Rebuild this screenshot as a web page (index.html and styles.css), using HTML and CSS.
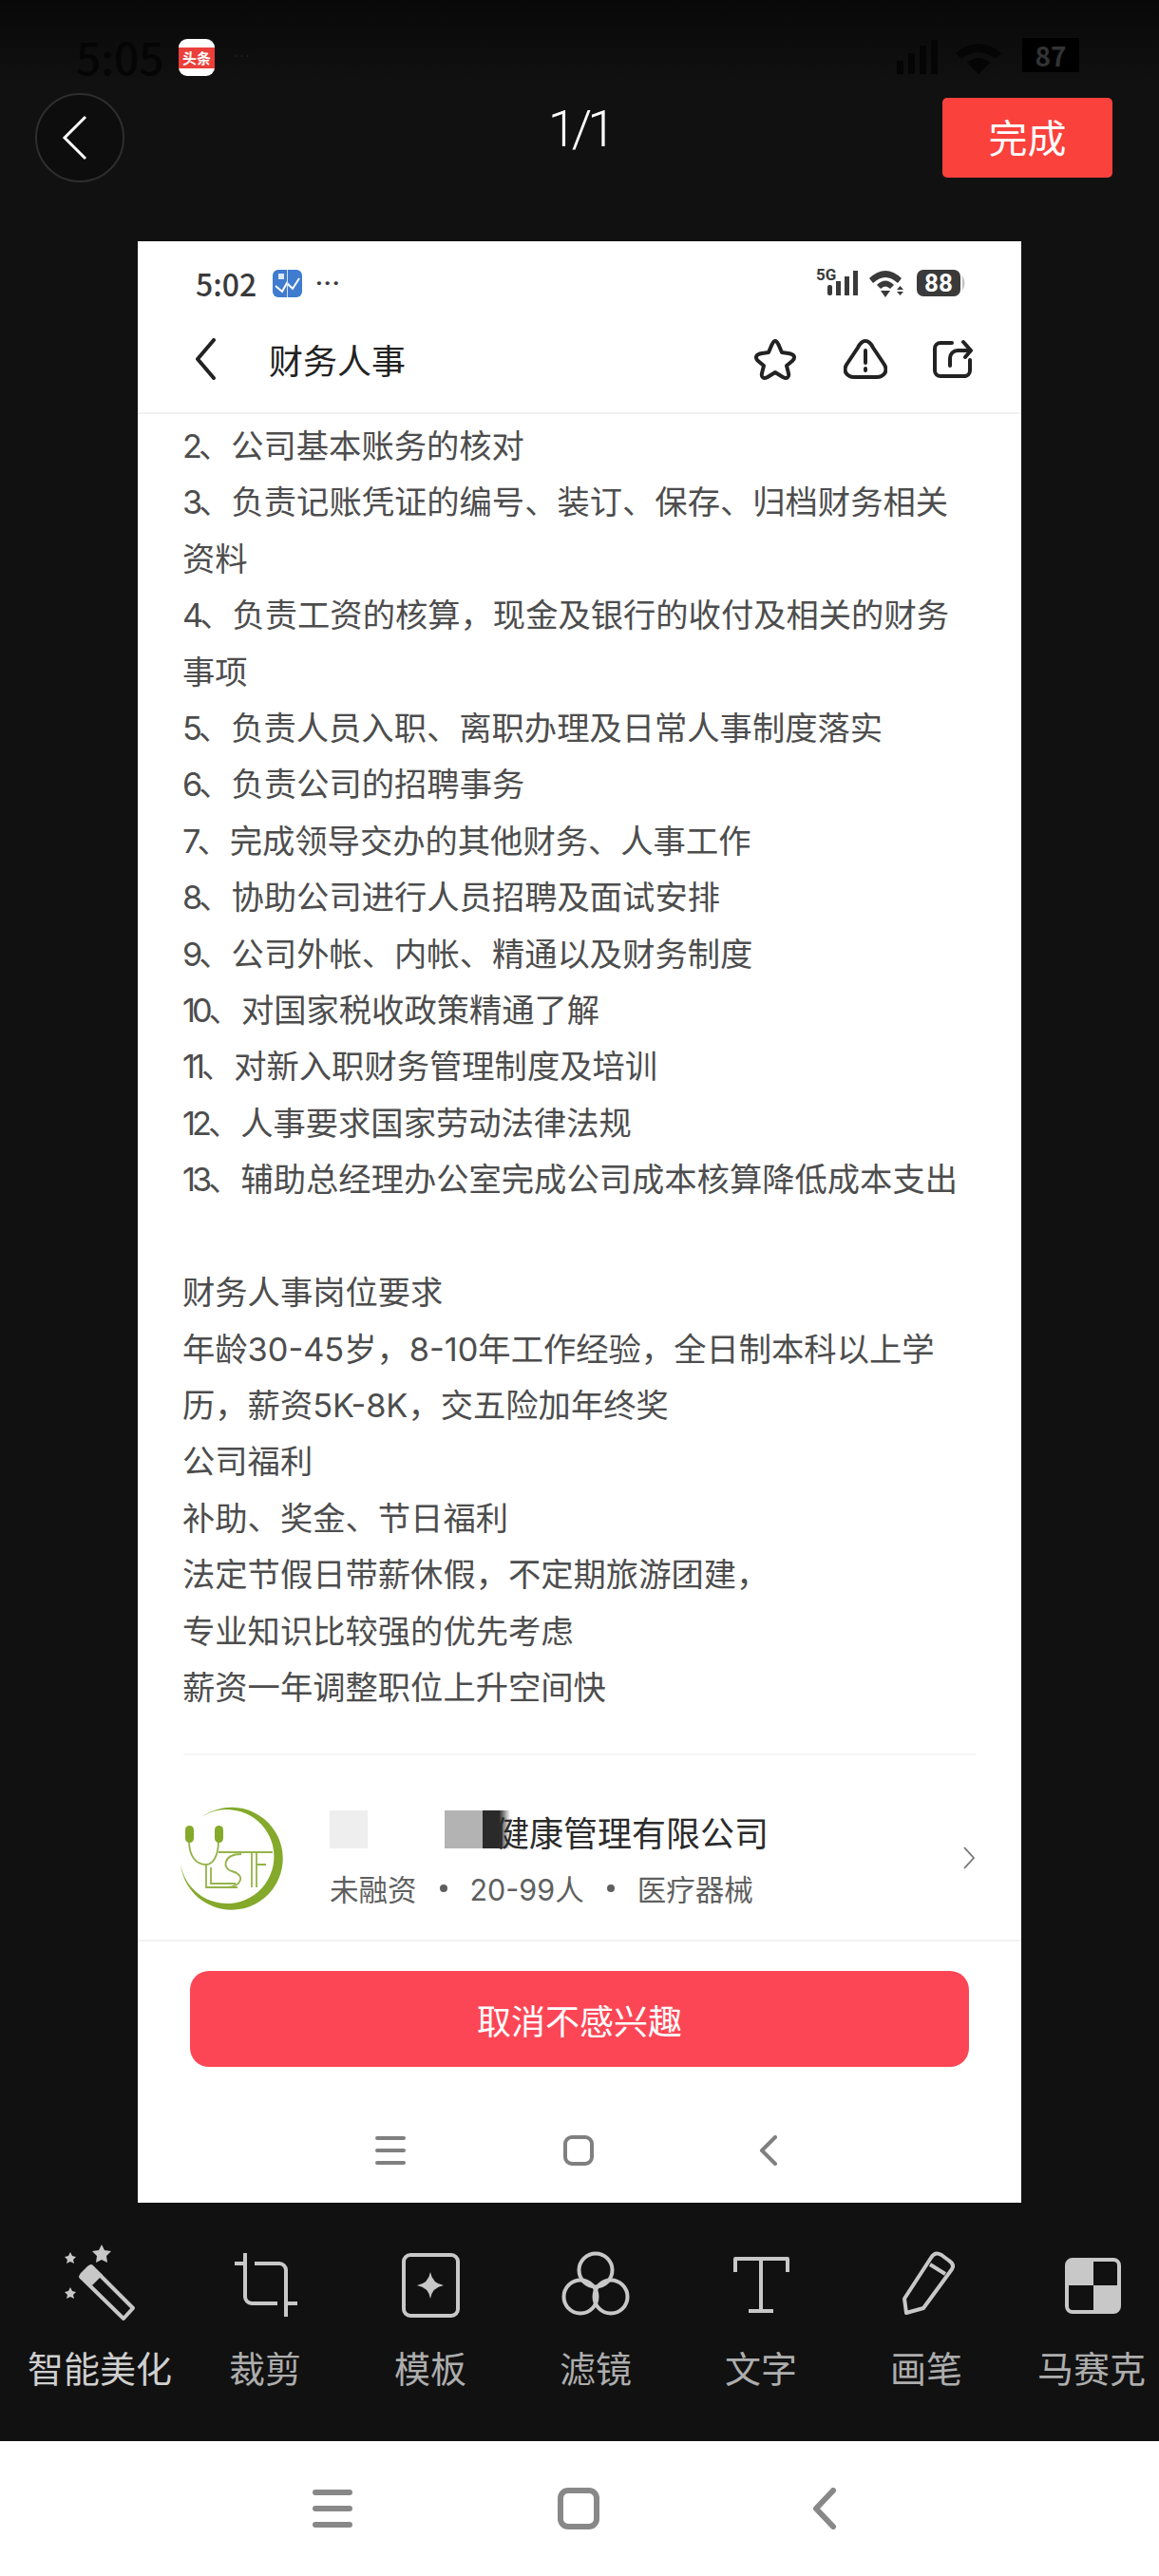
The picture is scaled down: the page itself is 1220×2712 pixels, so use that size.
FILE: index.html
```html
<!DOCTYPE html>
<html lang="zh-CN">
<head>
    <meta charset="UTF-8">
    <meta content="width=device-width, initial-scale=1.0" name="viewport">
    <title>完成</title>
    <link rel="stylesheet" href="styles.css">
</head>
<body>

<div class="status">
    <span class="status-time">5:05</span>
    <div class="app-badge"><span>头条</span></div>
    <span class="status-dots">···</span>
    <svg class="status-net" width="130" height="40" viewBox="0 0 130 40">
        <rect x="6" y="24" width="7" height="14"/>
        <rect x="18" y="16" width="7" height="22"/>
        <rect x="30" y="8" width="7" height="30"/>
        <rect x="42" y="2" width="7" height="36"/>
        <path d="M68 16 Q92 -4 116 16 L110 22 Q92 8 74 22Z M80 26 Q92 16 104 26 L92 38Z"/>
    </svg>
    <div class="status-batt">87</div>
</div>

<div class="topbar">
    <div class="round-back">
        <svg width="30" height="50" viewBox="0 0 30 50"><path d="M26 3 L4 25 L26 47"/></svg>
    </div>
    <div class="pager">1/1</div>
    <button class="done">完成</button>
</div>

<div class="phone">
    <div class="p-status">
        <span class="p-time">5:02</span>
        <svg class="p-app" width="31" height="29" viewBox="0 0 31 29">
            <rect width="31" height="29" rx="6" fill="#3f7bcf"/>
            <path d="M3 17 L10 23 L15 14 L21 20 L28 9" fill="none" stroke="#fff" stroke-width="2"/>
            <path d="M15.500 0V29" stroke="#cfe0f5" stroke-width="1"/>
            <rect x="6" y="4" width="6" height="6" fill="#dbe8f8"/>
        </svg>
        <span class="p-dots">···</span>
        <svg class="p-net" width="160" height="36" viewBox="0 0 160 36">
            <text x="0" y="15" class="p-5g">5G</text>
            <g fill="#3a3a3a">
                <rect x="12" y="20" width="5" height="11" rx="2"/>
                <rect x="21" y="16" width="5" height="15"/>
                <rect x="30" y="11" width="5" height="20"/>
                <rect x="39" y="5" width="5" height="26"/>
                <path d="M56 13 Q73 -3 90 13 L86 18 Q73 6 60 18Z M64 20 Q73 11 82 20 L78 24 Q73 19 68 24Z M68 26 H78 L73 33Z M85 25 L88.500 21 L92 25Z M85 27 H92 L88.500 31Z"/>
            </g>
            <rect x="106" y="4" width="46" height="28" rx="7" fill="#3a3a3a"/>
            <path d="M154 10 Q159 18 154 26Z" fill="#c4c4c4"/>
            <text x="129" y="27" class="p-batt">88</text>
        </svg>
    </div>

    <div class="p-head">
        <svg class="p-back" width="24" height="44" viewBox="0 0 24 44"><path d="M21 2 L4 22 L21 42"/></svg>
        <div class="p-title">财务人事</div>
        <svg class="p-star" width="48" height="44" viewBox="0 0 48 44"><path d="M24 3 C26 3 27 6 28 8 L31 15 L38 16 C44 17 46 20 42 24 L36 29 L38 37 C39 42 36 43 32 41 L24 36 L16 41 C12 43 9 42 10 37 L12 29 L6 24 C2 20 4 17 10 16 L17 15 L20 8 C21 6 22 3 24 3Z"/></svg>
        <svg class="p-alert" width="46" height="42" viewBox="0 0 46 42"><path d="M23 2 C27 2 29 5 31 9 L43 27 C47 34 42 40 35 40 H11 C4 40 -1 34 3 27 L15 9 C17 5 19 2 23 2Z"/><path d="M23 12 V25 M23 31 V33"/></svg>
        <svg class="p-share" width="44" height="42" viewBox="0 0 44 42"><path d="M21 4 H9 a6 6 0 0 0 -6 6 V33 a6 6 0 0 0 6 6 H34 a6 6 0 0 0 6 -6 V22"/><path d="M19 28 V20 a8 8 0 0 1 8 -8 H40 M33 3 L41 12 L35 19"/></svg>
    </div>

    <div class="job">
        <p><b>2</b>、公司基本账务的核对</p>
        <p><b>3</b>、负责记账凭证的编号、装订、保存、归档财务相关<br>资料</p>
        <p><b>4</b>、负责工资的核算，现金及银行的收付及相关的财务<br>事项</p>
        <p><b>5</b>、负责人员入职、离职办理及日常人事制度落实</p>
        <p><b>6</b>、负责公司的招聘事务</p>
        <p><b>7</b>、完成领导交办的其他财务、人事工作</p>
        <p><b>8</b>、协助公司进行人员招聘及面试安排</p>
        <p><b>9</b>、公司外帐、内帐、精通以及财务制度</p>
        <p><b>10</b>、对国家税收政策精通了解</p>
        <p><b>11</b>、对新入职财务管理制度及培训</p>
        <p><b>12</b>、人事要求国家劳动法律法规</p>
        <p><b>13</b>、辅助总经理办公室完成公司成本核算降低成本支出</p>
        <p>&nbsp;</p>
        <p>财务人事岗位要求</p>
        <p>年龄30-45岁，8-10年工作经验，全日制本科以上学<br>历，薪资5K-8K，交五险加年终奖</p>
        <p>公司福利</p>
        <p>补助、奖金、节日福利</p>
        <p>法定节假日带薪休假，不定期旅游团建，</p>
        <p>专业知识比较强的优先考虑</p>
        <p>薪资一年调整职位上升空间快</p>
    </div>

    <div class="company">
        <svg class="logo" width="112" height="112" viewBox="0 0 112 112">
            <path class="logo-ring" d="M22 11 A54 54 0 1 1 0 60 A49.500 49.500 0 1 0 22 11Z"/>
            <g class="logo-lines">
                <path d="M9 36 C9 52 16 61 27 61 C34 61 40 52 40 36"/>
                <path d="M27 61 V85 H60 M32 64 V81 H58"/>
                <path d="M40 48 H97 M80 61 H90"/>
                <path d="M64 50 C44 50 44 66 54 68 C68 71 66 84 48 85"/>
                <path d="M75 48 V85 M80 48 V85"/>
            </g>
            <rect class="logo-pill" x="5" y="20" width="9" height="18" rx="4.500"/>
            <rect class="logo-pill" x="36" y="20" width="9" height="18" rx="4.500"/>
        </svg>
        <div class="company-text">
            <div class="company-name">
                <i class="blur blur-light"></i>
                <i class="blur blur-grey"></i>
                <i class="blur blur-dark"></i>
                健康管理有限公司
            </div>
            <div class="company-sub">
                <span>未融资</span><b></b><span>20-99人</span><b></b><span>医疗器械</span>
            </div>
        </div>
        <svg class="company-arrow" width="14" height="24" viewBox="0 0 14 24"><path d="M2 1 L12 12 L2 23"/></svg>
    </div>

    <div class="p-action">
        <button class="cancel">取消不感兴趣</button>
    </div>

    <div class="p-nav">
        <svg width="32" height="32" viewBox="0 0 32 32"><path d="M2 3 H30 M2 16 H30 M2 29 H30"/></svg>
        <svg width="32" height="32" viewBox="0 0 32 32"><rect x="2" y="2" width="28" height="28" rx="7"/></svg>
        <svg width="32" height="32" viewBox="0 0 32 32"><path d="M22 2 L8 16 L22 30"/></svg>
    </div>
</div>

<div class="tools">
    <div class="tool tool-on">
        <svg viewBox="0 0 100 90">
            <path class="solid" d="M52 5 L55 11 L62 12 L57 17 L58 24 L52 21 L46 24 L47 17 L42 12 L49 11Z"/>
            <path class="solid" d="M19 13 L21 17 L25 18 L22 21 L23 25 L19 23 L15 25 L16 21 L13 18 L17 17Z"/>
            <path class="solid" d="M19 50 L21 54 L25 55 L22 58 L23 62 L19 60 L15 62 L16 58 L13 55 L17 54Z"/>
            <path d="M30 39 L41 28 L85 72 L75 83Z"/>
            <path class="solid" d="M29 39 Q28 37 30 35 L37 28 Q40 25 43 28 L53 37 L42 48Z"/>
        </svg>
        <span>智能美化</span>
    </div>
    <div class="tool">
        <svg viewBox="0 0 100 90">
            <path d="M29 14 V60 a7 7 0 0 0 7 7 H63 M18 25 H29 M39 25 H65 a7 7 0 0 1 7 7 V81 M72 67 H84"/>
        </svg>
        <span>裁剪</span>
    </div>
    <div class="tool">
        <svg viewBox="0 0 100 90">
            <rect x="22" y="16" width="57" height="64" rx="7"/>
            <path class="solid" d="M50 34 Q52 46 64 48 Q52 50 50 62 Q48 50 36 48 Q48 46 50 34Z"/>
        </svg>
        <span>模板</span>
    </div>
    <div class="tool">
        <svg viewBox="0 0 100 90">
            <circle cx="50" cy="32" r="17.500"/>
            <circle cx="34" cy="60" r="17.500"/>
            <circle cx="66" cy="60" r="17.500"/>
        </svg>
        <span>滤镜</span>
    </div>
    <div class="tool">
        <svg viewBox="0 0 100 90">
            <path d="M23 34 V20 H78 V34 M50 20 V75 M37 75 H63"/>
        </svg>
        <span>文字</span>
    </div>
    <div class="tool">
        <svg viewBox="0 0 100 90">
            <path d="M29 77 L27 62 L55 19 Q59 12 66 16 L74 22 Q80 26 77 31 L47 72 Z M54 26 L70 36"/>
        </svg>
        <span>画笔</span>
    </div>
    <div class="tool">
        <svg viewBox="0 0 100 90">
            <rect x="24" y="21" width="55" height="55" rx="6"/>
            <path class="solid" d="M24 48 V27 a6 6 0 0 1 6 -6 H52 V48Z M52 48 H79 V70 a6 6 0 0 1 -6 6 H52Z"/>
        </svg>
        <span>马赛克</span>
    </div>
</div>

<div class="nav">
    <svg width="42" height="44" viewBox="0 0 42 44"><path d="M3 5 H39 M3 22 H39 M3 39 H39"/></svg>
    <svg width="44" height="44" viewBox="0 0 44 44"><rect x="3" y="3" width="38" height="38" rx="8"/></svg>
    <svg width="44" height="44" viewBox="0 0 44 44"><path d="M30 3 L12 22 L30 41"/></svg>
</div>

</body>
</html>
```

FILE: styles.css
```css
html, body {
    width: 1220px;
    height: 2712px;
    margin: 0;
    overflow: hidden;
}
body {
    background: #111;
    font-family: "Noto Sans CJK SC", "Noto Sans", sans-serif;
}
button {
    border: 0;
    font-family: inherit;
    color: #fff;
}

/* dimmed phone status bar */
.status {
    height: 90px;
    box-sizing: border-box;
    padding: 40px 84px 0 80px;
    display: flex;
    align-items: flex-start;
    background: linear-gradient(#080808, #111);
    color: #050505;
}
.status-time {
    font-size: 46px;
    font-weight: 500;
    line-height: 38px;
    width: 108px;
}
.app-badge {
    width: 38px;
    height: 39px;
    margin-top: 1px;
    border-radius: 9px;
    background: #fff;
    display: flex;
    align-items: center;
    justify-content: center;
}
.app-badge span {
    width: 100%;
    height: 22px;
    background: #ea3f3a;
    color: #fff;
    font-size: 15px;
    font-weight: 700;
    line-height: 22px;
    text-align: center;
}
.status-dots {
    margin-left: 20px;
    font-family: "Roboto", sans-serif;
    font-size: 22px;
    line-height: 40px;
    color: #1c1c1c;
}
.status-net {
    margin-left: auto;
}
.status-net path, .status-net rect {
    fill: #050505;
}
.status-batt {
    width: 60px;
    height: 36px;
    margin-left: 8px;
    background: #000;
    color: #333;
    font-size: 28px;
    font-weight: 700;
    line-height: 36px;
    text-align: center;
}

.topbar {
    height: 95px;
    margin-top: 7px;
    padding: 0 49px 0 37px;
    display: flex;
    align-items: center;
    justify-content: space-between;
    position: relative;
}
.round-back {
    width: 94px;
    height: 94px;
    box-sizing: border-box;
    border: 2px solid #2e2e2e;
    border-radius: 50%;
    background: #0d0d0d;
    display: flex;
    align-items: center;
    justify-content: center;
}
.round-back svg {
    margin-right: 10px;
}
.round-back path {
    fill: none;
    stroke: #fff;
    stroke-width: 3;
}
.pager {
    position: absolute;
    left: 0;
    right: 0;
    top: 12px;
    text-align: center;
    color: #fff;
    font-family: "Roboto", sans-serif;
    font-size: 54px;
    font-weight: 300;
    line-height: 54px;
    letter-spacing: -5px;
}
.done {
    width: 179px;
    height: 84px;
    padding: 0 0 4px;
    border-radius: 5px;
    background: #fb413c;
    font-size: 41px;
}

/* the screenshot inside */
.phone {
    width: 930px;
    height: 2065px;
    margin: 62px 0 0 145px;
    background: #fff;
}
.p-status {
    height: 88px;
    box-sizing: border-box;
    padding: 0 56px 0 61px;
    display: flex;
    align-items: center;
    color: #3a3a3a;
}
.p-time {
    width: 81px;
    font-size: 32px;
    font-weight: 500;
}
.p-dots {
    margin-left: 14px;
    font-family: "Roboto", sans-serif;
    font-size: 26px;
    font-weight: 700;
    letter-spacing: 1px;
}
.p-net {
    margin-left: auto;
}
.p-5g {
    font-family: "Roboto", sans-serif;
    font-size: 17px;
    font-weight: 700;
    fill: #3a3a3a;
}
.p-batt {
    font-family: "Roboto", sans-serif;
    font-size: 26px;
    font-weight: 700;
    fill: #fff;
    text-anchor: middle;
}
.p-head {
    height: 72px;
    padding: 0 50px 20px 59px;
    border-bottom: 2px solid #f0f0f0;
    display: flex;
    align-items: center;
}
.p-head svg path {
    fill: none;
    stroke: #222;
    stroke-width: 4;
    stroke-linejoin: round;
    stroke-linecap: round;
}
.p-back {
    margin-right: 55px;
}
.p-title {
    font-size: 36px;
    color: #222;
    flex: 1;
}
.p-star {
    margin-right: 48px;
}
.p-alert {
    margin-right: 47px;
}

.job {
    padding: 4px 0 0 47px;
    height: 1365px;
    color: #4d4d4d;
    font-family: "Inter", "Noto Sans CJK SC", sans-serif;
    font-size: 34.300px;
    line-height: 59.400px;
    white-space: nowrap;
}
.job p {
    margin: 0;
}
/* list numbers sit tighter than the default digit width */
.job b {
    font-weight: 400;
    letter-spacing: -4px;
}

.company {
    height: 194px;
    margin: 41px 48px 0;
    border-top: 2px solid #f5f5f5;
    display: flex;
    align-items: flex-start;
}
.logo {
    margin: 54px 45px 0 -3px;
    flex-shrink: 0;
}
.logo-ring, .logo-pill {
    fill: #84a92b;
}
.logo-lines path {
    fill: none;
    stroke: #95b34a;
    stroke-width: 1.800;
}
.company-text {
    flex: 1;
    padding-top: 50px;
}
.company-name {
    height: 60px;
    padding-left: 174px;
    position: relative;
    color: #2b2b2b;
    font-size: 36px;
    line-height: 60px;
}
.blur {
    position: absolute;
    top: 8px;
    height: 40px;
}
.blur-light {
    left: 0;
    width: 40px;
    background: #eeeeee;
}
.blur-grey {
    left: 121px;
    width: 40px;
    background: #b3b3b3;
}
.blur-dark {
    left: 161px;
    width: 29px;
    background: linear-gradient(90deg, #2a2a2a 60%, rgba(42, 42, 42, 0));
}
.company-sub {
    height: 60px;
    display: flex;
    align-items: center;
    color: #5f5f5f;
    font-family: "Inter", "Noto Sans CJK SC", sans-serif;
    font-size: 30.500px;
}
.company-sub b {
    width: 8px;
    height: 8px;
    margin: 0 24px;
    border-radius: 50%;
    background: #5f5f5f;
}
.company-arrow {
    margin-top: 96px;
}
.company-arrow path {
    fill: none;
    stroke: #777;
    stroke-width: 1.800;
}

.p-action {
    border-top: 2px solid #f1f1f1;
    padding: 31px 55px 0;
}
.cancel {
    display: block;
    width: 100%;
    height: 101px;
    border-radius: 20px;
    background: #fc4655;
    font-size: 36px;
}
.p-nav {
    margin-top: 72px;
    padding-left: 250px;
    display: flex;
    gap: 166px;
}
.p-nav path, .p-nav rect {
    fill: none;
    stroke: #808080;
    stroke-width: 4;
    stroke-linecap: round;
    stroke-linejoin: round;
}
.p-nav svg:last-child {
    margin-left: 3px;
}

/* editor tools */
.tools {
    height: 251px;
    box-sizing: border-box;
    padding: 39px 0 0 18px;
    display: grid;
    grid-template-columns: repeat(7, 174px);
    align-items: start;
}
.tool {
    display: flex;
    flex-direction: column;
    align-items: center;
    color: #adadad;
    font-size: 38px;
    line-height: 54px;
}
.tool svg {
    width: 100px;
    height: 90px;
    margin-bottom: 17px;
}
.tool span {
    white-space: nowrap;
}
.tool path, .tool rect, .tool circle {
    fill: none;
    stroke: #c8c8c8;
    stroke-width: 4;
    stroke-linejoin: round;
}
.tool .solid {
    fill: #c8c8c8;
    stroke: none;
}
.tool-on {
    color: #cfcfcf;
}

.nav {
    height: 142px;
    box-sizing: border-box;
    padding: 49px 0 0 329px;
    background: #fff;
    display: flex;
    gap: 216px;
}
.nav path, .nav rect {
    fill: none;
    stroke: #888;
    stroke-width: 6;
    stroke-linecap: round;
    stroke-linejoin: round;
}
```
